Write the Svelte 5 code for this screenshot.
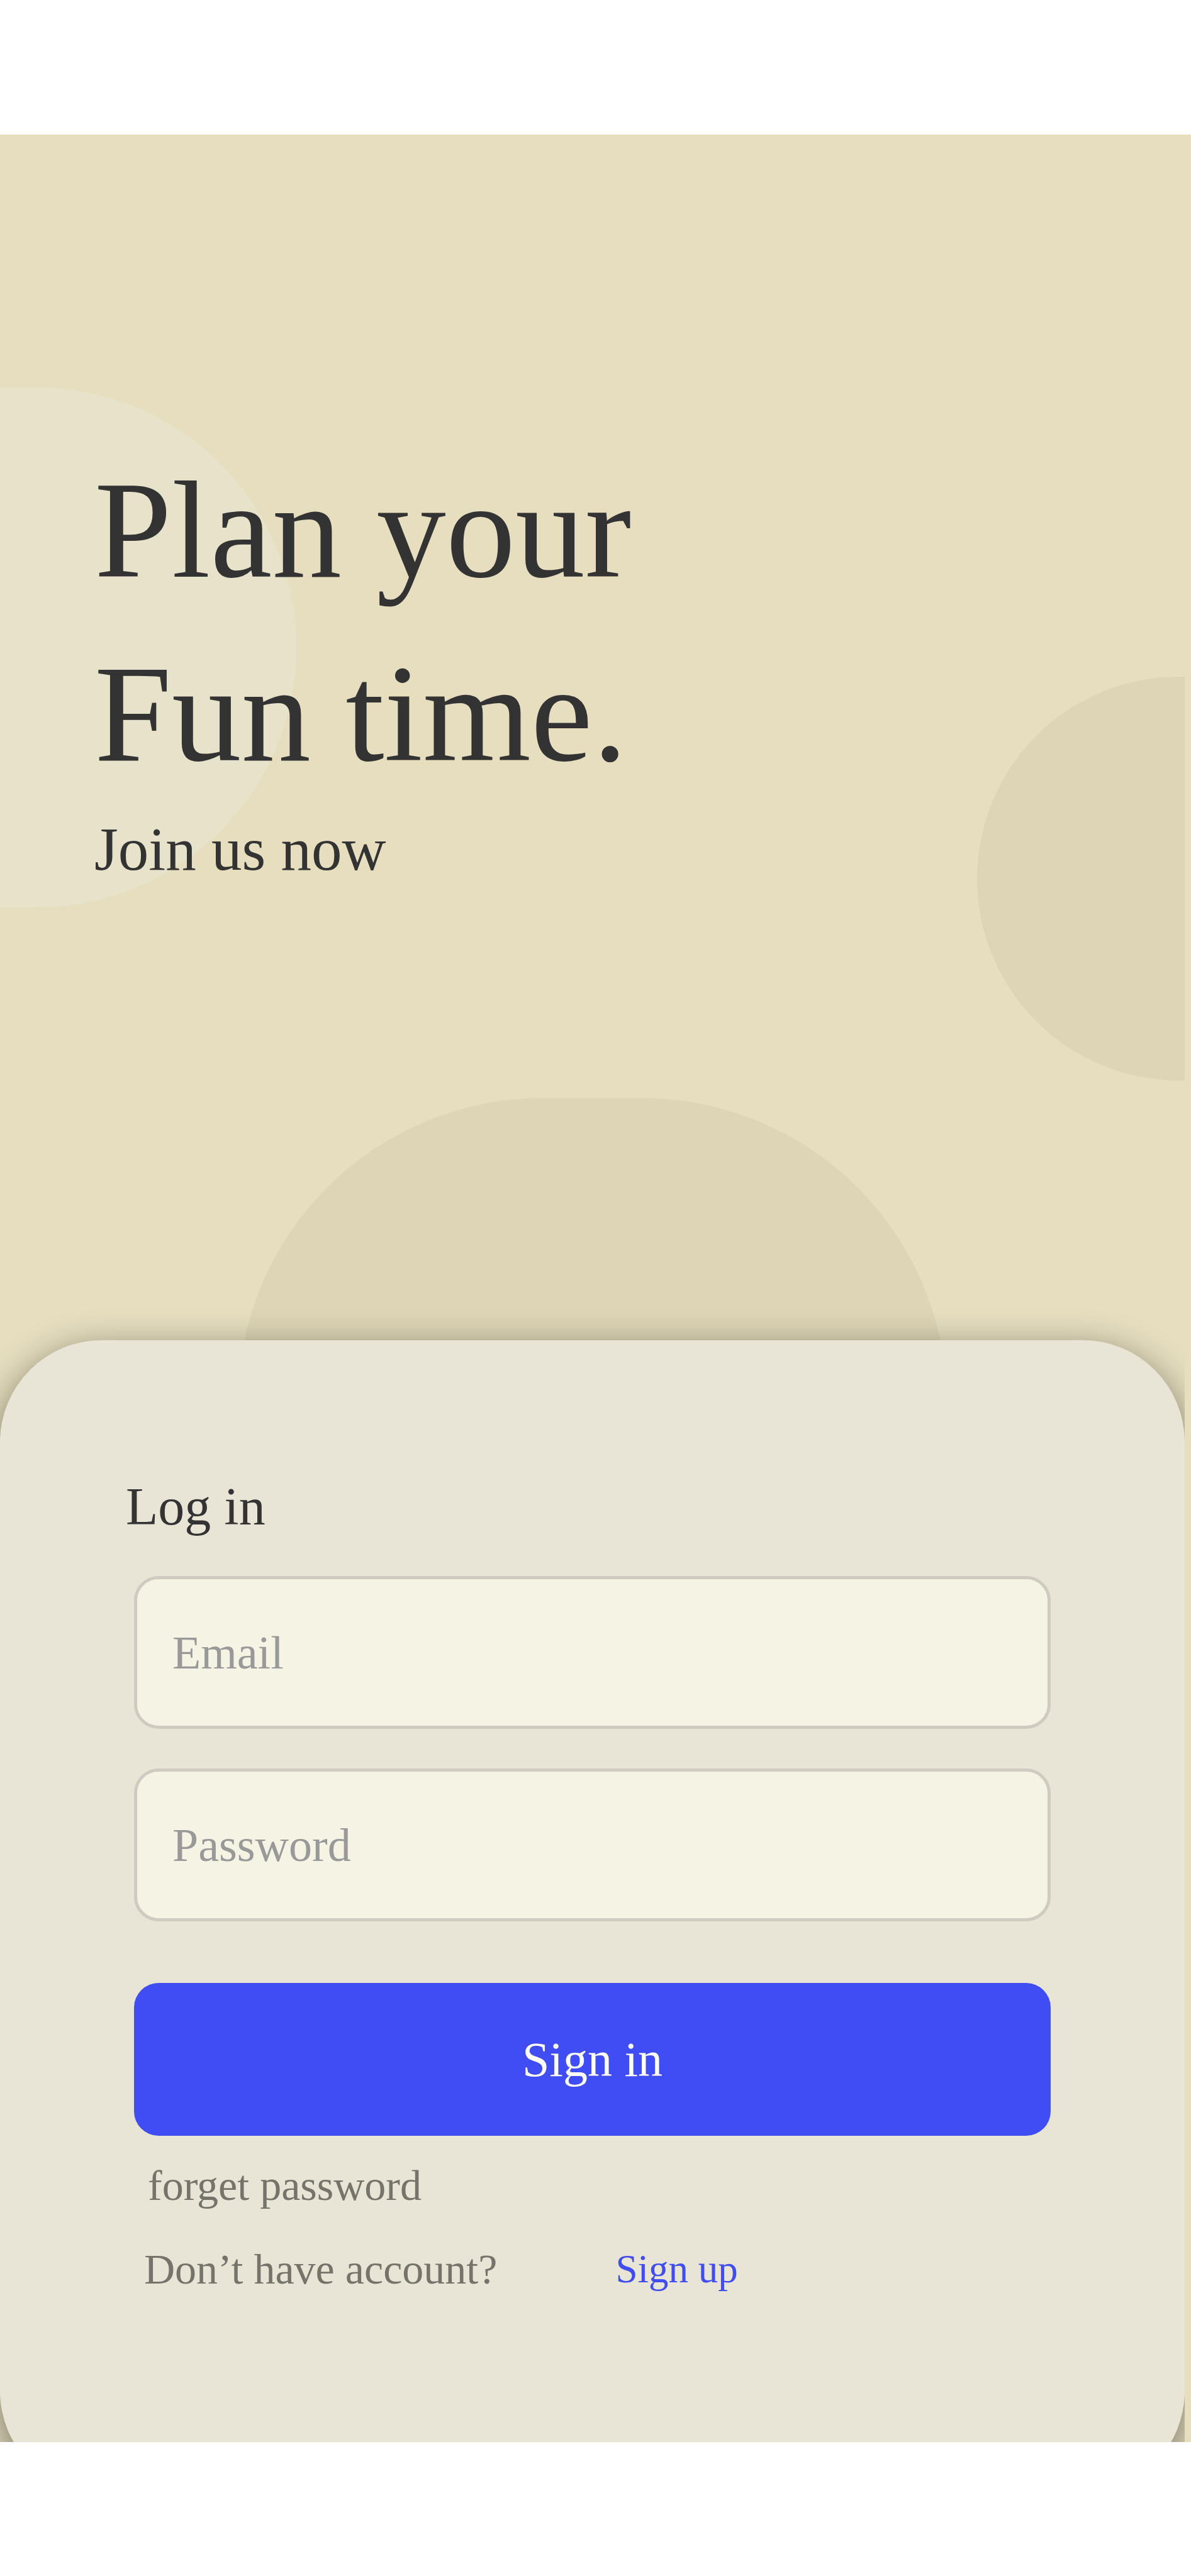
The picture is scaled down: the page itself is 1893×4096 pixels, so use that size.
<script>
  let email = $state('');
  let password = $state('');
</script>

<main class="page">
  <div class="backdrop">
    <div class="screen">
      <div class="blob blob-left"></div>
      <div class="blob blob-right"></div>
      <div class="blob blob-bottom"></div>

      <header class="hero">
        <h1>Plan your<br />Fun time.</h1>
        <p>Join us now</p>
      </header>

      <section class="card">
        <h2>Log in</h2>
        <form onsubmit={(event) => event.preventDefault()}>
          <div class="fields">
            <input type="email" placeholder="Email" aria-label="Email" bind:value={email} />
            <input type="password" placeholder="Password" aria-label="Password" bind:value={password} />
          </div>
          <button type="submit">Sign in</button>
        </form>
        <a class="forgot" href="#forgot">forget password</a>
        <div class="register">
          <span>Don’t have account?</span>
          <a href="#signup">Sign up</a>
        </div>
      </section>
    </div>
  </div>
</main>

<style>
  :global(body) {
    margin: 0;
    background: #ffffff;
  }

  .page {
    padding: 214px 0 213px;
    font-family: 'Liberation Serif', 'Times New Roman', serif;
    color: #333333;
  }

  .backdrop {
    background: #e6debf;
    padding-right: 10px;
  }

  .screen {
    position: relative;
    display: flow-root;
    overflow: hidden;
  }

  .blob {
    position: absolute;
    background: #ddd5b5;
  }

  .blob-left {
    top: 402px;
    left: 0;
    width: 471px;
    height: 827px;
    border-radius: 0 414px 414px 0;
    background: #e7e3cb;
  }

  .blob-right {
    top: 862px;
    right: 0;
    width: 330px;
    height: 642px;
    border-radius: 321px 0 0 321px;
  }

  .blob-bottom {
    top: 1532px;
    left: 378px;
    right: 378px;
    height: 970px;
    border-radius: 485px;
  }

  .hero {
    position: relative;
    padding: 483px 150px 724px;
  }

  h1 {
    margin: 0 0 14px;
    font-size: 221px;
    line-height: 292px;
    font-weight: 400;
  }

  .hero p {
    margin: 0;
    font-size: 97px;
    line-height: 112px;
  }

  .card {
    position: relative;
    margin-bottom: -81px;
    padding: 217px 213px 316px;
    border-radius: 162px;
    background: #e8e5d6;
    box-shadow: 0 16px 60px rgba(0, 0, 0, 0.48);
  }

  h2 {
    margin: 0 0 62px -13px;
    font-size: 84px;
    line-height: 96px;
    font-weight: 400;
  }

  form {
    display: flex;
    flex-direction: column;
    gap: 98px;
  }

  .fields {
    display: flex;
    flex-direction: column;
    gap: 63px;
  }

  input,
  button {
    box-sizing: border-box;
    width: 100%;
    height: 243px;
    margin: 0;
    border-radius: 39px;
    font-family: inherit;
  }

  input {
    padding: 2px 56px 0;
    border: 5px solid #cfcbc0;
    background: #f5f3e4;
    color: #333333;
    font-size: 74px;
    outline: none;
  }

  input::placeholder {
    color: #999999;
    opacity: 1;
  }

  button {
    padding: 0;
    border: 0;
    background: #404df3;
    color: #ffffff;
    font-size: 78px;
  }

  .forgot {
    display: block;
    width: fit-content;
    margin: 39px 0 53px 22px;
    color: #76746a;
    font-size: 68px;
    line-height: 80px;
    text-decoration: none;
  }

  .register {
    display: flex;
    align-items: center;
    gap: 188px;
    margin-left: 16px;
    color: #76746a;
    font-size: 68px;
    line-height: 80px;
  }

  .register a {
    color: #404df3;
    font-size: 63px;
    text-decoration: none;
  }
</style>
